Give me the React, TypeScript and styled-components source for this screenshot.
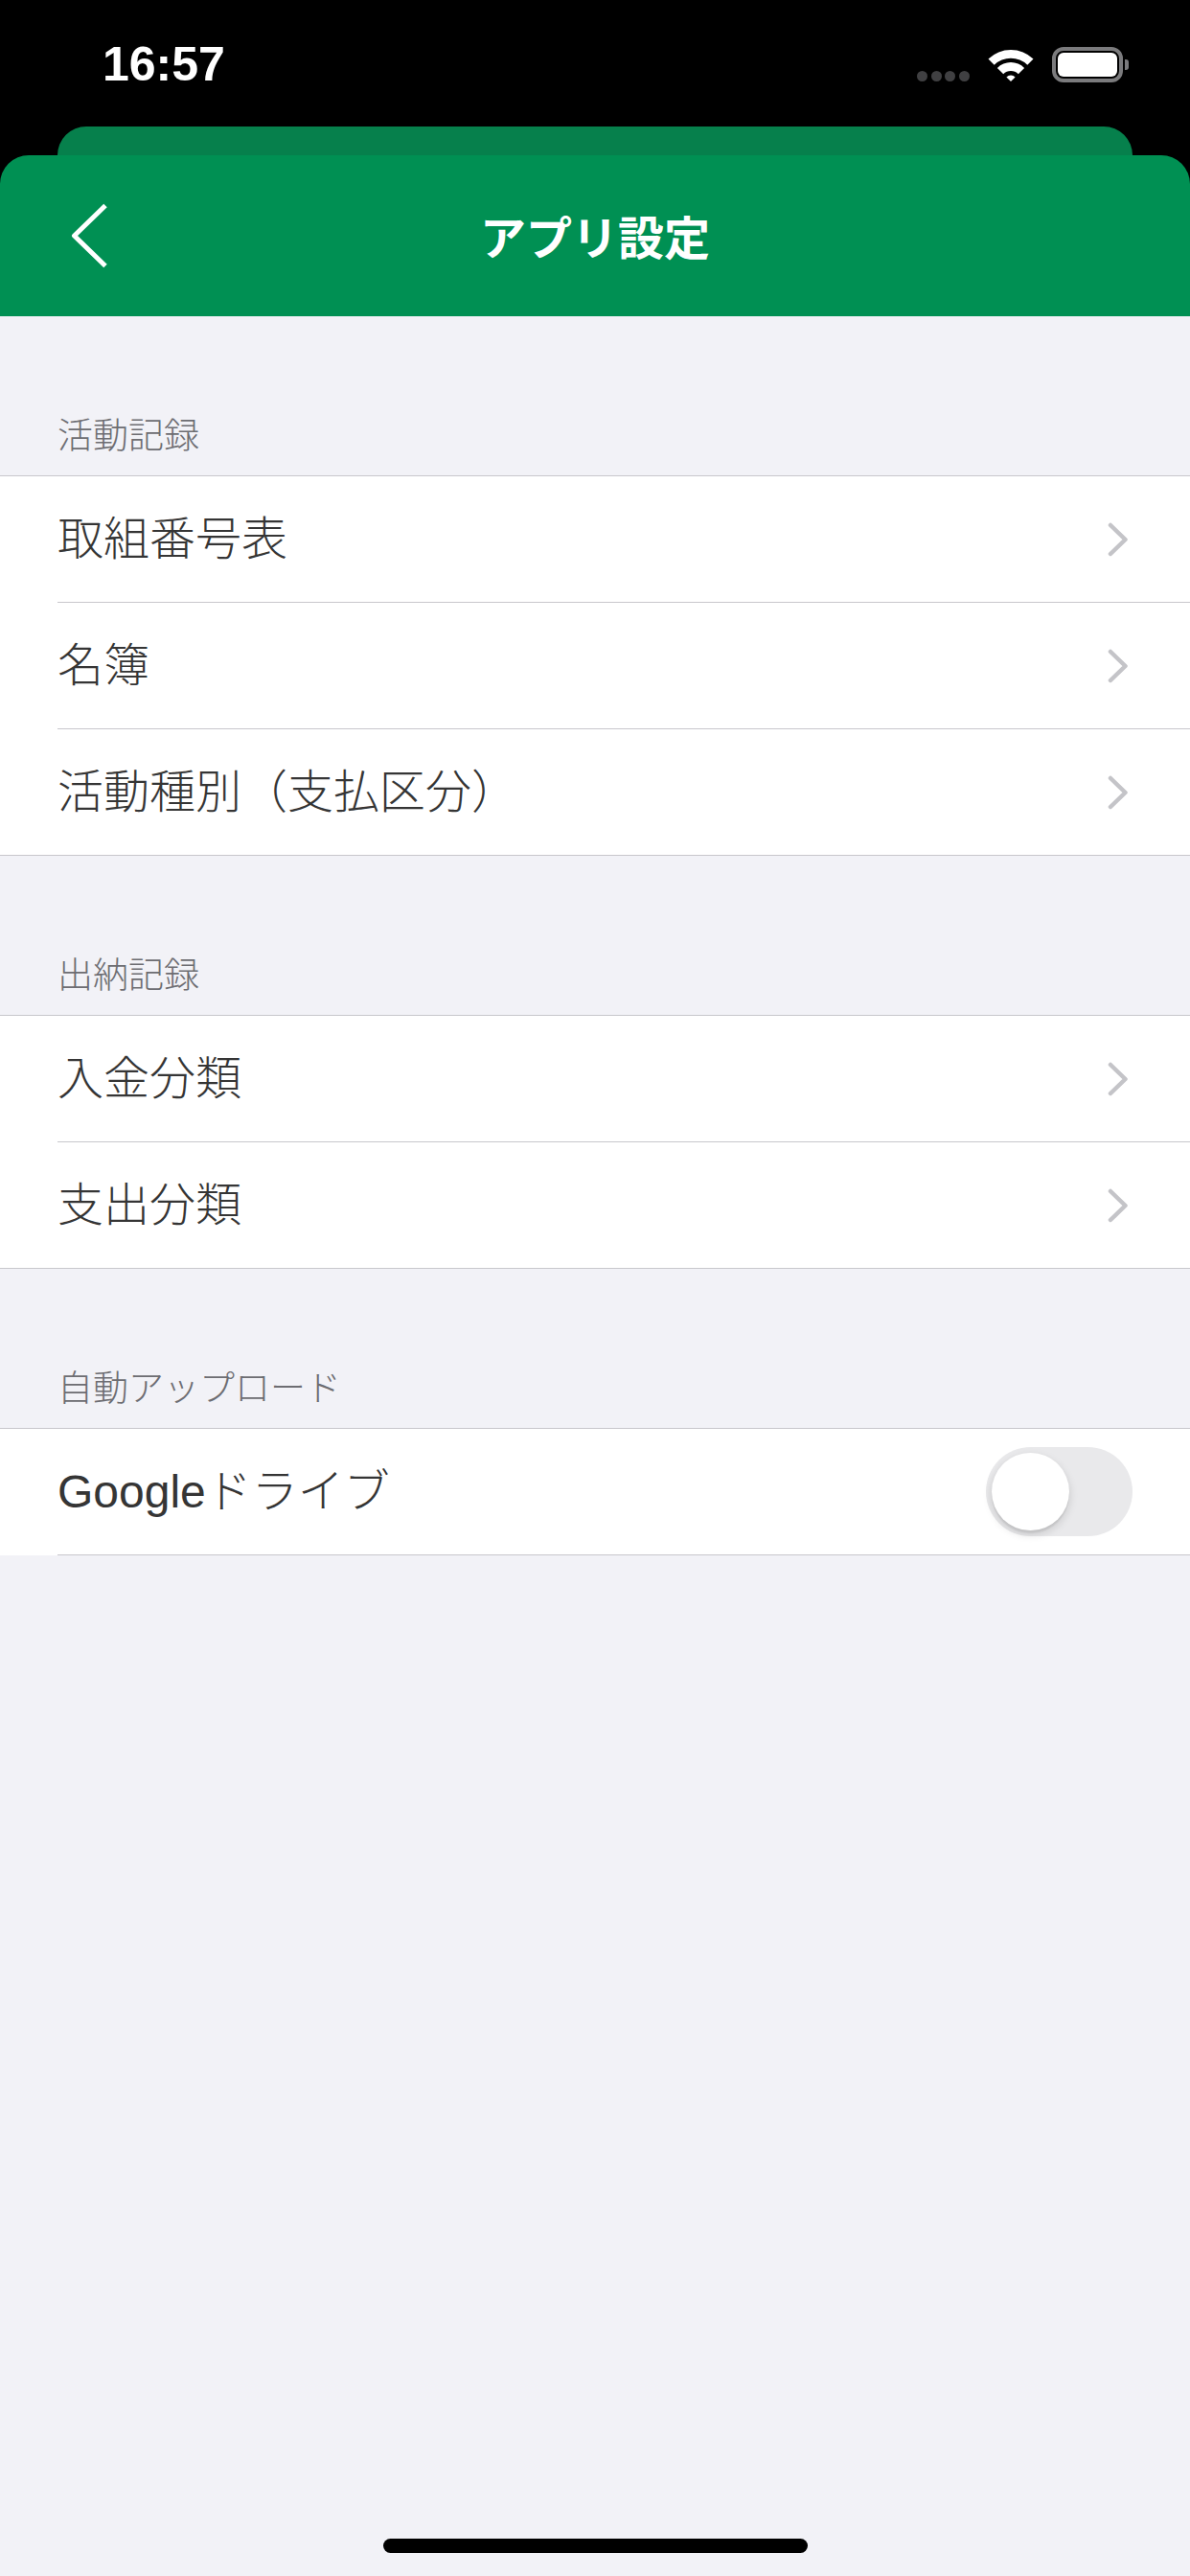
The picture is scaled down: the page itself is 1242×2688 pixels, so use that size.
import React from 'react';
import styled, { createGlobalStyle } from 'styled-components';

const GlobalStyle = createGlobalStyle`
  html, body {
    margin: 0;
    padding: 0;
    background: #f2f2f7;
  }
  body {
    font-family: "Liberation Sans", "Noto Sans CJK JP", sans-serif;
    -webkit-font-smoothing: antialiased;
  }
  * {
    box-sizing: border-box;
  }
`;

const Screen = styled.div`
  width: 1242px;
  min-height: 2688px;
  display: flex;
  flex-direction: column;
  background: #f2f2f7;
`;

const Top = styled.div`
  background: #000;
`;

const StatusBar = styled.div`
  height: 132px;
  display: flex;
  align-items: center;
  justify-content: space-between;
  padding: 0 64px 0 107px;
`;

const Clock = styled.span`
  color: #fff;
  font-family: "Liberation Sans", sans-serif;
  font-weight: 700;
  font-size: 50px;
  line-height: 1;
  padding-top: 2px;
`;

const StatusIcons = styled.div`
  display: flex;
  align-items: center;
  gap: 19px;
  height: 37px;
  margin-top: 3px;
`;

const Dots = styled.div`
  display: flex;
  gap: 3.7px;
  align-self: flex-end;
  margin-bottom: 1px;
`;

const Dot = styled.span`
  width: 11px;
  height: 11px;
  border-radius: 50%;
  background: #404042;
`;

const Battery = styled.div`
  display: flex;
  align-items: center;
  gap: 2px;
`;

const BatteryBody = styled.div`
  width: 74px;
  height: 37px;
  border: 4px solid #7b7b7d;
  border-radius: 12px;
  padding: 2px;
`;

const BatteryFill = styled.div`
  height: 100%;
  background: #fff;
  border-radius: 6px;
`;

const BatteryNub = styled.span`
  width: 4px;
  height: 11px;
  background: #7b7b7d;
  border-radius: 0 3px 3px 0;
`;

const BackCard = styled.div`
  height: 30px;
  margin: 0 60px;
  background: #06804c;
  border-radius: 30px 30px 0 0;
`;

const NavBar = styled.header`
  height: 168px;
  background: #009053;
  border-radius: 30px 30px 0 0;
  display: grid;
  grid-template-columns: 1fr auto 1fr;
  align-items: center;
`;

const BackButton = styled.button`
  justify-self: start;
  margin-left: 73px;
  padding: 0;
  border: none;
  background: none;
  display: flex;
`;

const NavTitle = styled.h1`
  margin: 0;
  color: #fff;
  font-family: "Noto Sans CJK JP", sans-serif;
  font-weight: 700;
  font-size: 48px;
  line-height: 1.2;
`;

const SectionLabel = styled.div`
  height: 166px;
  display: flex;
  align-items: flex-end;
  padding: 0 60px 22px;
  font-family: "Noto Sans CJK JP", sans-serif;
  font-weight: 300;
  font-size: 37px;
  line-height: 44px;
  color: #6d6d72;
`;

const Group = styled.div<{ $closed: boolean }>`
  background: #fff;
  border-top: 1px solid #c8c7cc;
  border-bottom: ${p => (p.$closed ? '1px solid #c8c7cc' : 'none')};
`;

const Row = styled.div`
  padding-left: 60px;
`;

const RowBody = styled.div<{ $divider: boolean }>`
  height: ${p => (p.$divider ? '132px' : '131px')};
  display: flex;
  align-items: center;
  justify-content: space-between;
  padding-right: 60px;
  border-bottom: ${p => (p.$divider ? '1px solid #c8c7cc' : 'none')};
`;

const RowLabel = styled.span`
  font-family: "Liberation Sans", "Noto Sans CJK JP", sans-serif;
  font-weight: 300;
  font-size: 48px;
  line-height: 1.2;
  color: #353535;
`;

const Chevron = styled.svg`
  margin-right: 4px;
`;

const Switch = styled.div<{ $on: boolean }>`
  width: 153px;
  height: 93px;
  border-radius: 47px;
  padding: 6px;
  display: flex;
  justify-content: ${p => (p.$on ? 'flex-end' : 'flex-start')};
  background: ${p => (p.$on ? '#34c759' : '#e9e9eb')};
`;

const Knob = styled.span`
  width: 81px;
  height: 81px;
  border-radius: 50%;
  background: #fff;
  box-shadow: 0 4px 10px rgba(0, 0, 0, 0.15), 0 3px 1px rgba(0, 0, 0, 0.06);
`;

const HomeIndicator = styled.div`
  width: 443px;
  height: 15px;
  border-radius: 8px;
  background: #000;
  margin: auto auto 24px;
`;

type Item = { label: string; toggle?: boolean };
type Section = { title: string; items: Item[]; closed: boolean };

const sections: Section[] = [
  {
    title: '活動記録',
    closed: true,
    items: [{ label: '取組番号表' }, { label: '名簿' }, { label: '活動種別（支払区分）' }],
  },
  {
    title: '出納記録',
    closed: true,
    items: [{ label: '入金分類' }, { label: '支出分類' }],
  },
  {
    title: '自動アップロード',
    closed: false,
    items: [{ label: 'Googleドライブ', toggle: true }],
  },
];

const WifiIcon = () => (
  <svg width="48" height="35" viewBox="0 0 48 35">
    <path d="M0.5 11.5 A34 34 0 0 1 47.5 11.5 L41.3 17.7 A25 25 0 0 0 6.7 17.7 Z" fill="#fff" />
    <path d="M9.9 20.9 A20 20 0 0 1 38.1 20.9 L31.8 27.2 A11 11 0 0 0 16.2 27.2 Z" fill="#fff" />
    <path d="M19.4 30.4 A6.5 6.5 0 0 1 28.6 30.4 L24 35 Z" fill="#fff" />
  </svg>
);

const App = () => {
  return (
    <Screen>
      <GlobalStyle />
      <Top>
        <StatusBar>
          <Clock>16:57</Clock>
          <StatusIcons>
            <Dots>
              <Dot />
              <Dot />
              <Dot />
              <Dot />
            </Dots>
            <WifiIcon />
            <Battery>
              <BatteryBody>
                <BatteryFill />
              </BatteryBody>
              <BatteryNub />
            </Battery>
          </StatusIcons>
        </StatusBar>
        <BackCard />
        <NavBar>
          <BackButton aria-label="戻る">
            <svg width="40" height="68" viewBox="0 0 40 68">
              <polyline
                points="37,2.5 4.5,34 37,65.5"
                fill="none"
                stroke="#fff"
                strokeWidth="5"
                strokeLinejoin="round"
              />
            </svg>
          </BackButton>
          <NavTitle>アプリ設定</NavTitle>
          <span />
        </NavBar>
      </Top>

      {sections.map(section => (
        <React.Fragment key={section.title}>
          <SectionLabel>{section.title}</SectionLabel>
          <Group $closed={section.closed}>
            {section.items.map((item, i) => {
              const last = i === section.items.length - 1;
              return (
                <Row key={item.label}>
                  <RowBody $divider={!last || !section.closed}>
                    <RowLabel>{item.label}</RowLabel>
                    {item.toggle ? (
                      <Switch $on={false}>
                        <Knob />
                      </Switch>
                    ) : (
                      <Chevron width="22" height="36" viewBox="0 0 22 36">
                        <polyline
                          points="3,3 18.5,18 3,33"
                          fill="none"
                          stroke="#c4c4c8"
                          strokeWidth="4.5"
                          strokeLinecap="round"
                          strokeLinejoin="round"
                        />
                      </Chevron>
                    )}
                  </RowBody>
                </Row>
              );
            })}
          </Group>
        </React.Fragment>
      ))}

      <HomeIndicator />
    </Screen>
  );
};

export default App;
